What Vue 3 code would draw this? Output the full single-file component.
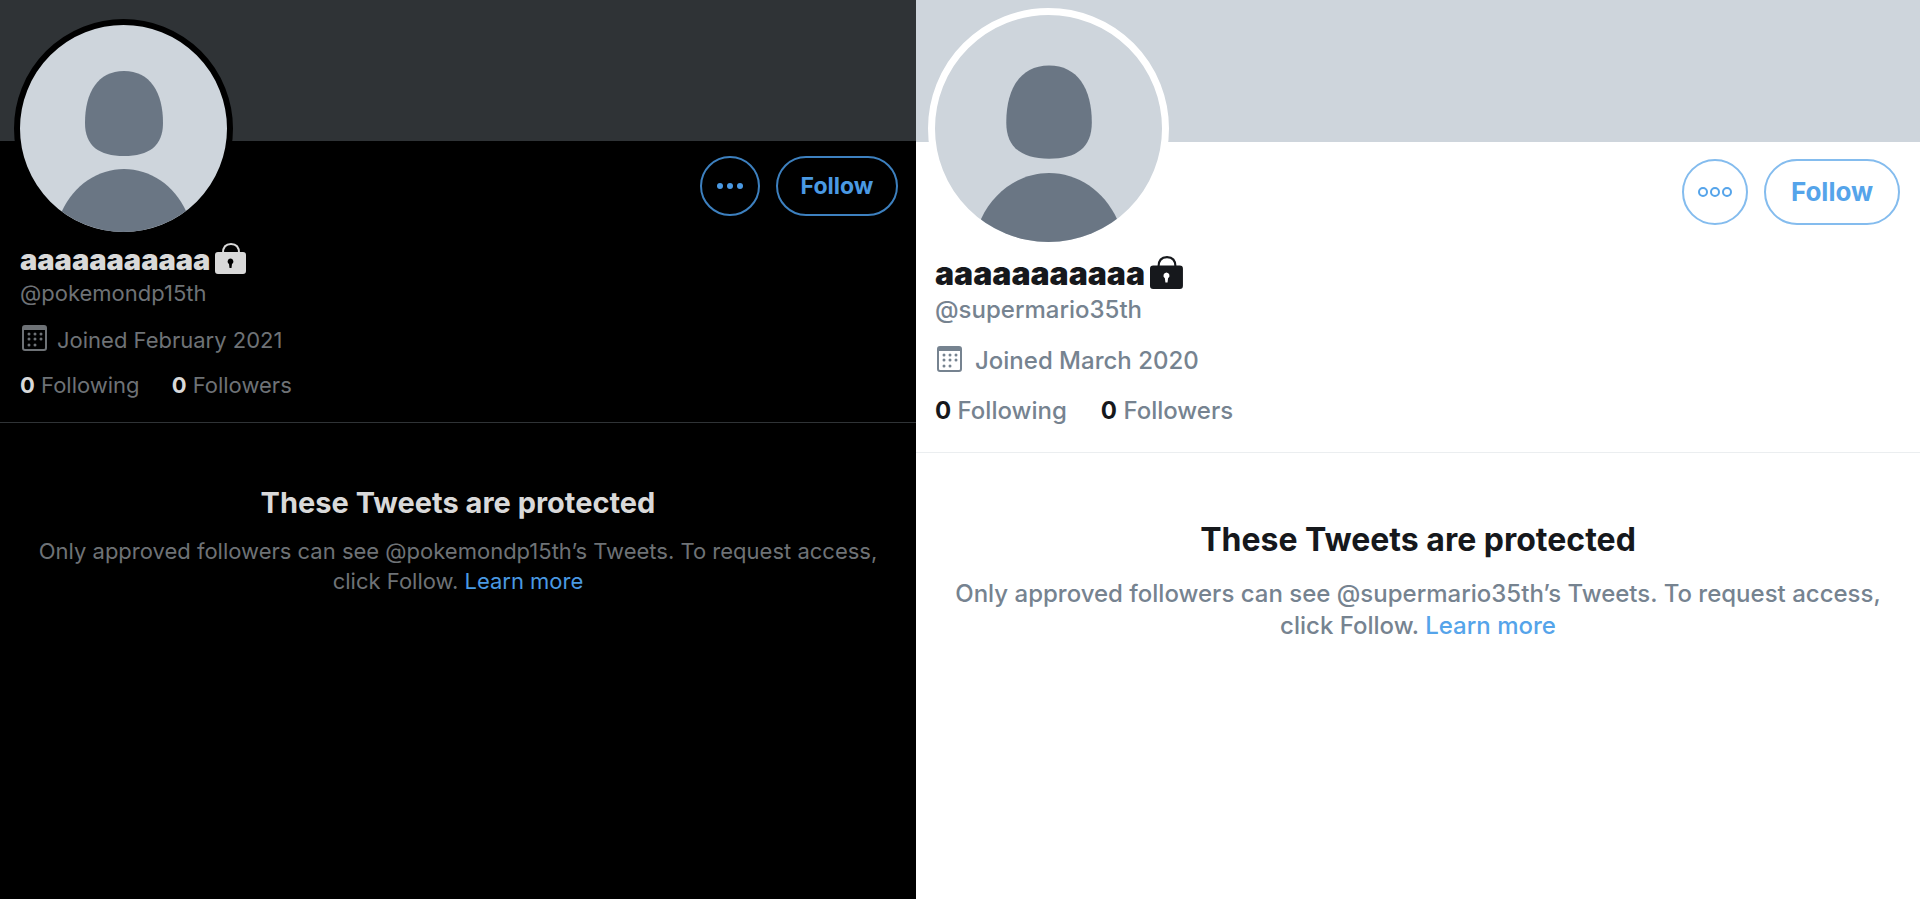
<template>
  <main class="compare">
    <section
      v-for="user in users"
      :key="user.handle"
      class="profile"
      :class="user.theme"
    >
      <div class="banner"></div>
      <header class="info">
        <div class="top">
          <div class="avatar">
            <svg viewBox="0 0 207 207" aria-hidden="true">
              <path
                d="M104 46C130 46 143 67 143 98C143 121 129 131 104 131C79 131 65 121 65 98C65 67 78 46 104 46Z"
              />
              <path d="M42 186C54 160 78 144 104 144S154 160 166 186V207H42Z" />
            </svg>
          </div>
          <div class="actions">
            <button class="more" type="button" aria-label="More">
              <span class="dot"></span>
              <span class="dot"></span>
              <span class="dot"></span>
            </button>
            <button class="follow" type="button">Follow</button>
          </div>
        </div>
        <h1 class="name">
          {{ user.name }}
          <svg class="lock" viewBox="0 0 32 34" aria-hidden="true">
            <path class="shackle" d="M8 10C8 4 11 1 16 1S24 4 24 10" />
            <path
              fill-rule="evenodd"
              d="M3 9H28Q31 9 31 12V28Q31 31 28 31H3Q0 31 0 28V12Q0 9 3 9ZM15.500 15.500A3 3 0 0 0 14 21L14.500 25H16.500L17 21A3 3 0 0 0 15.500 15.500Z"
            />
          </svg>
        </h1>
        <p class="handle">@{{ user.handle }}</p>
        <p class="joined">
          <svg class="calendar" viewBox="-2 0 30 30" aria-hidden="true">
            <rect class="frame" x="1" y="1" width="23" height="24" rx="2" />
            <path d="M1 1H24V5H1Z" />
            <circle
              v-for="(d, i) in dots"
              :key="i"
              :cx="d[0]"
              :cy="d[1]"
              r="1.500"
            />
          </svg>
          Joined {{ user.joined }}
        </p>
        <p class="counts">
          <a href="#"><b>0</b> Following</a>
          <a href="#"><b>0</b> Followers</a>
        </p>
      </header>
      <div class="protected">
        <h2>These Tweets are protected</h2>
        <p>
          Only approved followers can see @{{ user.handle }}’s Tweets. To request
          access, click Follow. <a href="#">Learn more</a>
        </p>
      </div>
    </section>
  </main>
</template>

<script setup>
const users = [
  {
    theme: "dark",
    name: "aaaaaaaaaaa",
    handle: "pokemondp15th",
    joined: "February 2021",
  },
  {
    theme: "light",
    name: "aaaaaaaaaaa",
    handle: "supermario35th",
    joined: "March 2020",
  },
];
// days of the calendar icon
const dots = [
  [7, 9],
  [13, 9],
  [19, 9],
  [7, 14],
  [13, 14],
  [19, 14],
  [7, 20],
  [13, 20],
];
</script>

<style>
body {
  margin: 0;
  background: #fff;
}
</style>

<style scoped>
.compare {
  display: flex;
  min-height: 100vh;
  font-family: Inter, "Liberation Sans", sans-serif;
}
.profile {
  min-width: 0;
  background: var(--bg);
  color: var(--muted);
  font-size: var(--text);
  line-height: var(--line);
}
.dark {
  flex: 916;
  --bg: #000;
  --banner: #2f3336;
  --banner-height: 141px;
  --strong: #d9d9d9;
  --muted: #6e7276;
  --rule: #2f3336;
  --blue: #4a99e3;
  --outline: #3d80bf;
  --left: 20px;
  --right: 18px;
  --avatar: 207px;
  --ring: 6px;
  --rise: 122px;
  --top-end: 4px;
  --pill: 60px;
  --follow: 122px;
  --button-text: 23px;
  --button-top: 15px;
  --text: 22px;
  --line: 30px;
  --title: 29px;
  --title-line: 36px;
  --gap: 15px;
  --joined-top: 17px;
  --icon-gap: 7px;
  --counts-gap: 32px;
  --info-end: 22px;
  --protected-top: 62px;
}
.light {
  flex: 1004;
  --bg: #fff;
  --banner: #ced5dc;
  --banner-height: 142px;
  --strong: #16181c;
  --muted: #768390;
  --rule: #ebeef0;
  --blue: #55a4ea;
  --outline: #84bcee;
  --left: 19px;
  --right: 20px;
  --avatar: 227px;
  --ring: 7px;
  --rise: 134px;
  --top-end: 5px;
  --pill: 66px;
  --follow: 136px;
  --button-text: 26px;
  --button-top: 17px;
  --text: 24px;
  --line: 32px;
  --title: 32px;
  --title-line: 40px;
  --gap: 18px;
  --joined-top: 19px;
  --icon-gap: 10px;
  --counts-gap: 34px;
  --info-end: 25px;
  --protected-top: 67px;
}
.light .info,
.light .protected {
  font-weight: 500;
}
h1,
h2,
p {
  margin: 0;
}
a {
  color: inherit;
  text-decoration: none;
}
.banner {
  height: var(--banner-height);
  background: var(--banner);
}
.info {
  padding: 0 var(--right) var(--info-end) var(--left);
  border-bottom: 1px solid var(--rule);
}
.top {
  display: flex;
  justify-content: space-between;
  align-items: flex-start;
  margin-bottom: var(--top-end);
}
.avatar {
  width: var(--avatar);
  height: var(--avatar);
  margin-top: calc(0px - var(--rise));
  margin-left: calc(0px - var(--ring));
  border: var(--ring) solid var(--bg);
  border-radius: 50%;
  background: #ced5dc;
  overflow: hidden;
}
.avatar svg {
  display: block;
  fill: #6a7684;
}
.actions {
  display: flex;
  gap: 16px;
  padding-top: var(--button-top);
}
.actions button {
  box-sizing: border-box;
  height: var(--pill);
  padding: 0;
  border: 2px solid var(--outline);
  border-radius: 999px;
  background: none;
  color: var(--blue);
  font: inherit;
  font-size: var(--button-text);
  font-weight: 700;
  cursor: pointer;
}
.more {
  display: flex;
  width: var(--pill);
  align-items: center;
  justify-content: center;
  gap: 4px;
}
.actions .follow {
  width: var(--follow);
}
.dot {
  box-sizing: border-box;
  width: 6px;
  height: 6px;
  border-radius: 50%;
  background: var(--blue);
}
.light .more {
  gap: 2px;
}
.light .dot {
  width: 10px;
  height: 10px;
  border: 2px solid var(--blue);
  background: none;
}
.name {
  display: flex;
  align-items: center;
  gap: 5px;
  color: var(--strong);
  font-size: var(--title);
  font-weight: 900;
  line-height: var(--title-line);
}
.lock {
  width: 32px;
  fill: var(--strong);
}
.light .lock {
  width: 34px;
}
.shackle {
  fill: none;
  stroke: var(--strong);
  stroke-width: 2;
}
.joined {
  display: flex;
  align-items: center;
  gap: var(--icon-gap);
  margin-top: var(--joined-top);
}
.calendar {
  width: 30px;
  fill: var(--muted);
}
.frame {
  fill: none;
  stroke: var(--muted);
  stroke-width: 2;
}
.counts {
  display: flex;
  gap: var(--counts-gap);
  margin-top: var(--gap);
}
b {
  color: var(--strong);
  font-weight: 700;
}
.protected {
  padding: var(--protected-top) 20px;
  text-align: center;
}
h2 {
  margin-bottom: var(--gap);
  color: var(--strong);
  font-size: var(--title);
  font-weight: 700;
  line-height: var(--title-line);
}
.protected a {
  color: var(--blue);
}
</style>
